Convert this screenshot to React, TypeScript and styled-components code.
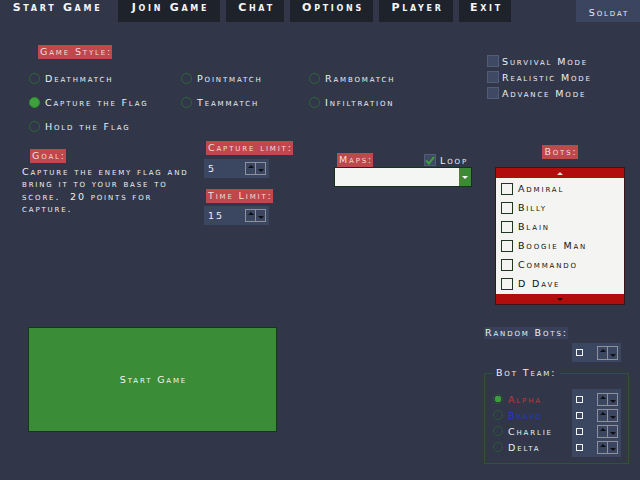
import React from 'react';
import styled, { createGlobalStyle, css } from 'styled-components';

const Global = createGlobalStyle`
  html, body { margin: 0; padding: 0; background: #313749; }
  body {
    width: 640px; height: 480px; overflow: hidden;
    font-family: "DejaVu Sans", Verdana, sans-serif;
    font-variant: small-caps;
    font-size: 9.5px;
    letter-spacing: 1.85px;
    color: #eceef1;
  }
  * { box-sizing: border-box; }
`;

const Page = styled.div`
  width: 640px;
  height: 480px;
  display: flex;
  flex-direction: column;
`;

const TopBar = styled.nav`
  display: flex;
  height: 22px;
  gap: 6px;
`;

const Tab = styled.div<{ $w: number; $active?: boolean }>`
  width: ${p => p.$w}px;
  background: ${p => (p.$active ? 'transparent' : '#1e222b')};
  display: flex;
  justify-content: center;
  padding: 1px 0 0 3px;
  font-weight: bold;
  font-size: 11px;
  letter-spacing: 2.7px;
  line-height: 13px;
  color: #f6f6f6;
`;

const SoldatTab = styled.div`
  margin-left: auto;
  width: 64px;
  background: #3b4560;
  display: flex;
  align-items: center;
  justify-content: center;
  padding: 2px 0 0 2px;
  color: #e8eaee;
`;

const Content = styled.div`
  display: flex;
  flex: 1;
`;

const LeftCol = styled.div`
  width: 484px;
  display: flex;
  flex-direction: column;
`;

const RightCol = styled.div`
  flex: 1;
  display: flex;
  flex-direction: column;
  align-items: flex-start;
`;

const RedLabel = styled.span`
  display: inline-block;
  align-self: flex-start;
  height: 14px;
  line-height: 14px;
  padding: 0 0 0 2px;
  background: #c0474b;
  color: #f4dcdc;
  white-space: nowrap;
`;

const StyleLabelRow = styled.div`
  padding: 23px 0 0 38px;
  display: flex;
`;

const RadioGrid = styled.div`
  margin-top: 7px;
  padding-left: 29px;
  display: grid;
  grid-template-columns: 152px 128px 1fr;
  grid-auto-rows: 24px;
  align-items: center;
`;

const Option = styled.label`
  display: flex;
  align-items: center;
  gap: 5px;
  white-space: nowrap;
`;

const Radio = styled.span<{ $on?: boolean; $ring?: boolean }>`
  width: 11px;
  height: 11px;
  border-radius: 50%;
  border: 1px solid #2d6835;
  flex: none;
  ${p =>
    p.$on &&
    (p.$ring
      ? css`
          background: radial-gradient(circle, #3f9d3f 0 3px, transparent 3.5px);
          border-color: #3a8a40;
        `
      : css`
          background: #3ea23c;
          border-color: #2d8a2e;
        `)}
`;

const MidRow = styled.div`
  display: flex;
  height: 87px;
  padding-left: 22px;
`;

const GoalBlock = styled.div`
  width: 182px;
  padding-top: 11px;
  display: flex;
  flex-direction: column;
`;

const GoalLabel = styled(RedLabel)`
  margin-left: 8px;
`;

const GoalText = styled.p`
  margin: 3px 0 0;
  line-height: 12.3px;
  white-space: nowrap;
`;

const LimitsBlock = styled.div`
  width: 130px;
  padding-top: 3px;
  display: flex;
  flex-direction: column;
`;

const LimitLabel = styled(RedLabel)<{ $gap: number }>`
  margin: ${p => p.$gap}px 0 0 2px;
`;

const Spin = styled.div<{ $w: number; $gap?: number }>`
  width: ${p => p.$w}px;
  height: 19px;
  margin-top: ${p => p.$gap ?? 0}px;
  background: #3b4660;
  display: flex;
  align-items: center;
  justify-content: space-between;
  padding: 0 3px 0 4px;
  flex: none;
`;

const Arrows = styled.div<{ $h?: number }>`
  display: flex;
  width: 21px;
  height: ${p => p.$h ?? 13}px;
  border: 1px solid #8d9199;
`;

const ArrowBtn = styled.span<{ $down?: boolean }>`
  flex: 1;
  display: flex;
  justify-content: center;
  align-items: ${p => (p.$down ? 'flex-end' : 'flex-start')};
  padding: ${p => (p.$down ? '0 0 2px' : '2px 0 0')};
  & + & { border-left: 1px solid #8d9199; }
  &::after {
    content: '';
    border-left: 3px solid transparent;
    border-right: 3px solid transparent;
    ${p =>
      p.$down
        ? css`border-top: 3px solid #0d0f14;`
        : css`border-bottom: 3px solid #0d0f14;`}
  }
`;

const MiniBox = styled.span`
  width: 7px;
  height: 7px;
  border: 1.5px solid #f2f2f2;
`;

const MapsBlock = styled.div`
  width: 138px;
  padding-top: 15px;
  display: flex;
  flex-direction: column;
`;

const MapsHeader = styled.div`
  display: flex;
  justify-content: space-between;
  align-items: center;
  padding-left: 3px;
  padding-right: 4px;
`;

const LoopGroup = styled.label`
  display: flex;
  align-items: center;
  gap: 4px;
`;

const CheckBox = styled.span<{ $size?: number }>`
  width: ${p => p.$size ?? 12}px;
  height: ${p => p.$size ?? 12}px;
  background: #3f4963;
  border: 1px solid #515c76;
  flex: none;
  display: flex;
  align-items: center;
  justify-content: center;
`;

const Combo = styled.div`
  height: 20px;
  border: 1px solid #143418;
  background: #f4f6f3;
  display: flex;
  justify-content: flex-end;
`;

const DropBtn = styled.span`
  width: 12px;
  background: #3a8b34;
  display: flex;
  align-items: center;
  justify-content: center;
  &::after {
    content: '';
    border-left: 3px solid transparent;
    border-right: 3px solid transparent;
    border-top: 3px solid #ffffff;
  }
`;

const StartButton = styled.button`
  margin: 102px 0 0 28px;
  width: 249px;
  height: 105px;
  background: #3b8c36;
  border: 1px solid #16381a;
  color: #f4f4f4;
  font: inherit;
  letter-spacing: inherit;
  font-variant: small-caps;
  padding: 0 0 0 2px;
`;

const Modes = styled.div`
  padding: 33px 0 0 3px;
  display: flex;
  flex-direction: column;
  gap: 4px;
`;

const ModeRow = styled.label`
  display: flex;
  align-items: center;
  gap: 3px;
  height: 12px;
  white-space: nowrap;
`;

const BotsWrap = styled.div`
  margin: 46px 0 0 11px;
  width: 130px;
  display: flex;
  flex-direction: column;
  align-items: center;
`;

const BotsLabel = styled(RedLabel)`
  align-self: center;
`;

const BotsList = styled.div`
  margin-top: 8px;
  width: 130px;
  height: 138px;
  border: 1px solid #3a1712;
  background: #f4f5f2;
  display: flex;
  flex-direction: column;
  align-self: stretch;
`;

const ScrollBar = styled.div<{ $down?: boolean }>`
  height: 10px;
  background: #b10d0d;
  display: flex;
  justify-content: center;
  align-items: center;
  &::after {
    content: '';
    border-left: 3px solid transparent;
    border-right: 3px solid transparent;
    ${p =>
      p.$down
        ? css`border-top: 3px solid #2a0a0a;`
        : css`border-bottom: 3px solid #e8d8d8;`}
  }
`;

const BotItems = styled.ul`
  flex: 1;
  margin: 0;
  padding: 1px 0 0 5px;
  list-style: none;
`;

const BotItem = styled.li`
  height: 19px;
  display: flex;
  align-items: center;
  gap: 5px;
  color: #121212;
`;

const ListBox = styled.span`
  width: 12px;
  height: 12px;
  border: 1px solid #1f361f;
  flex: none;
`;

const RandomLabel = styled.span`
  margin-top: 22px;
  width: 84px;
  height: 12px;
  line-height: 12px;
  background: #39415a;
  padding-left: 1px;
  white-space: nowrap;
`;

const RandomSpin = styled(Spin)`
  margin-left: 88px;
`;

const TeamBox = styled.fieldset`
  margin: 5px 0 0 0;
  width: 145px;
  padding: 0 8px 6px 8px;
  border: 1px solid #2d5439;
  min-width: 0;
`;

const TeamLegend = styled.legend`
  padding: 0 4px 0 3px;
  margin-left: 0;
  line-height: 12px;
`;

const TeamGrid = styled.div`
  display: grid;
  grid-template-columns: 79px 49px;
`;

const TeamList = styled.div`
  padding-top: 12px;
  display: flex;
  flex-direction: column;
`;

const TeamRow = styled.label<{ $color: string }>`
  height: 16px;
  display: flex;
  align-items: center;
  gap: 5px;
  color: ${p => p.$color};
`;

const TeamRadio = styled(Radio)`
  width: 10px;
  height: 10px;
  border-color: #2c5a34;
`;

const TeamPanel = styled.div`
  margin-top: 10px;
  background: #3b4660;
  padding: 2px 3px 2px 4px;
  display: flex;
  flex-direction: column;
`;

const TeamSpinRow = styled.div`
  height: 16px;
  display: flex;
  align-items: center;
  justify-content: space-between;
`;

const tabs: { label: string; w: number; active?: boolean }[] = [
  { label: 'Start Game', w: 112, active: true },
  { label: 'Join Game', w: 102 },
  { label: 'Chat', w: 58 },
  { label: 'Options', w: 83 },
  { label: 'Player', w: 74 },
  { label: 'Exit', w: 52 },
];

const styles = [
  { label: 'Deathmatch' },
  { label: 'Pointmatch' },
  { label: 'Rambomatch' },
  { label: 'Capture the Flag', on: true },
  { label: 'Teammatch' },
  { label: 'Infiltration' },
  { label: 'Hold the Flag' },
];

const bots = ['Admiral', 'Billy', 'Blain', 'Boogie Man', 'Commando', 'D Dave'];

const teams = [
  { name: 'Alpha', color: '#c8323b', on: true },
  { name: 'Bravo', color: '#2236cc' },
  { name: 'Charlie', color: '#eceef1' },
  { name: 'Delta', color: '#eceef1' },
];

const SpinArrows = ({ h }: { h?: number }) => (
  <Arrows $h={h}>
    <ArrowBtn />
    <ArrowBtn $down />
  </Arrows>
);

export default function App() {
  return (
    <Page>
      <Global />
      <TopBar>
        {tabs.map(t => (
          <Tab key={t.label} $w={t.w} $active={t.active}>
            {t.label}
          </Tab>
        ))}
        <SoldatTab>Soldat</SoldatTab>
      </TopBar>
      <Content>
        <LeftCol>
          <StyleLabelRow>
            <RedLabel>Game Style:</RedLabel>
          </StyleLabelRow>
          <RadioGrid>
            {styles.map(s => (
              <Option key={s.label}>
                <Radio $on={s.on} />
                {s.label}
              </Option>
            ))}
          </RadioGrid>
          <MidRow>
            <GoalBlock>
              <GoalLabel>Goal:</GoalLabel>
              <GoalText>
                Capture the enemy flag and
                <br />
                bring it to your base to
                <br />
                score.&nbsp; 20 points for
                <br />
                capture.
              </GoalText>
            </GoalBlock>
            <LimitsBlock>
              <LimitLabel $gap={0}>Capture limit:</LimitLabel>
              <Spin $w={65} $gap={4}>
                <span>5</span>
                <SpinArrows />
              </Spin>
              <LimitLabel $gap={11}>Time Limit:</LimitLabel>
              <Spin $w={65} $gap={3}>
                <span>15</span>
                <SpinArrows />
              </Spin>
            </LimitsBlock>
            <MapsBlock>
              <MapsHeader>
                <RedLabel>Maps:</RedLabel>
                <LoopGroup>
                  <CheckBox $size={12}>
                    <svg width="10" height="9" viewBox="0 0 10 9">
                      <path d="M1 4.5 L4 7.5 L9 1" fill="none" stroke="#3fa33f" strokeWidth="2" />
                    </svg>
                  </CheckBox>
                  Loop
                </LoopGroup>
              </MapsHeader>
              <Combo>
                <DropBtn />
              </Combo>
            </MapsBlock>
          </MidRow>
          <StartButton>Start Game</StartButton>
        </LeftCol>
        <RightCol>
          <Modes>
            {['Survival Mode', 'Realistic Mode', 'Advance Mode'].map(m => (
              <ModeRow key={m}>
                <CheckBox />
                {m}
              </ModeRow>
            ))}
          </Modes>
          <BotsWrap>
            <BotsLabel>Bots:</BotsLabel>
            <BotsList>
              <ScrollBar />
              <BotItems>
                {bots.map(b => (
                  <BotItem key={b}>
                    <ListBox />
                    {b}
                  </BotItem>
                ))}
              </BotItems>
              <ScrollBar $down />
            </BotsList>
          </BotsWrap>
          <RandomLabel>Random Bots:</RandomLabel>
          <RandomSpin $w={49} $gap={4}>
            <MiniBox />
            <SpinArrows h={14} />
          </RandomSpin>
          <TeamBox>
            <TeamLegend>Bot Team:</TeamLegend>
            <TeamGrid>
              <TeamList>
                {teams.map(t => (
                  <TeamRow key={t.name} $color={t.color}>
                    <TeamRadio $on={t.on} $ring />
                    {t.name}
                  </TeamRow>
                ))}
              </TeamList>
              <TeamPanel>
                {teams.map(t => (
                  <TeamSpinRow key={t.name}>
                    <MiniBox />
                    <SpinArrows />
                  </TeamSpinRow>
                ))}
              </TeamPanel>
            </TeamGrid>
          </TeamBox>
        </RightCol>
      </Content>
    </Page>
  );
}
